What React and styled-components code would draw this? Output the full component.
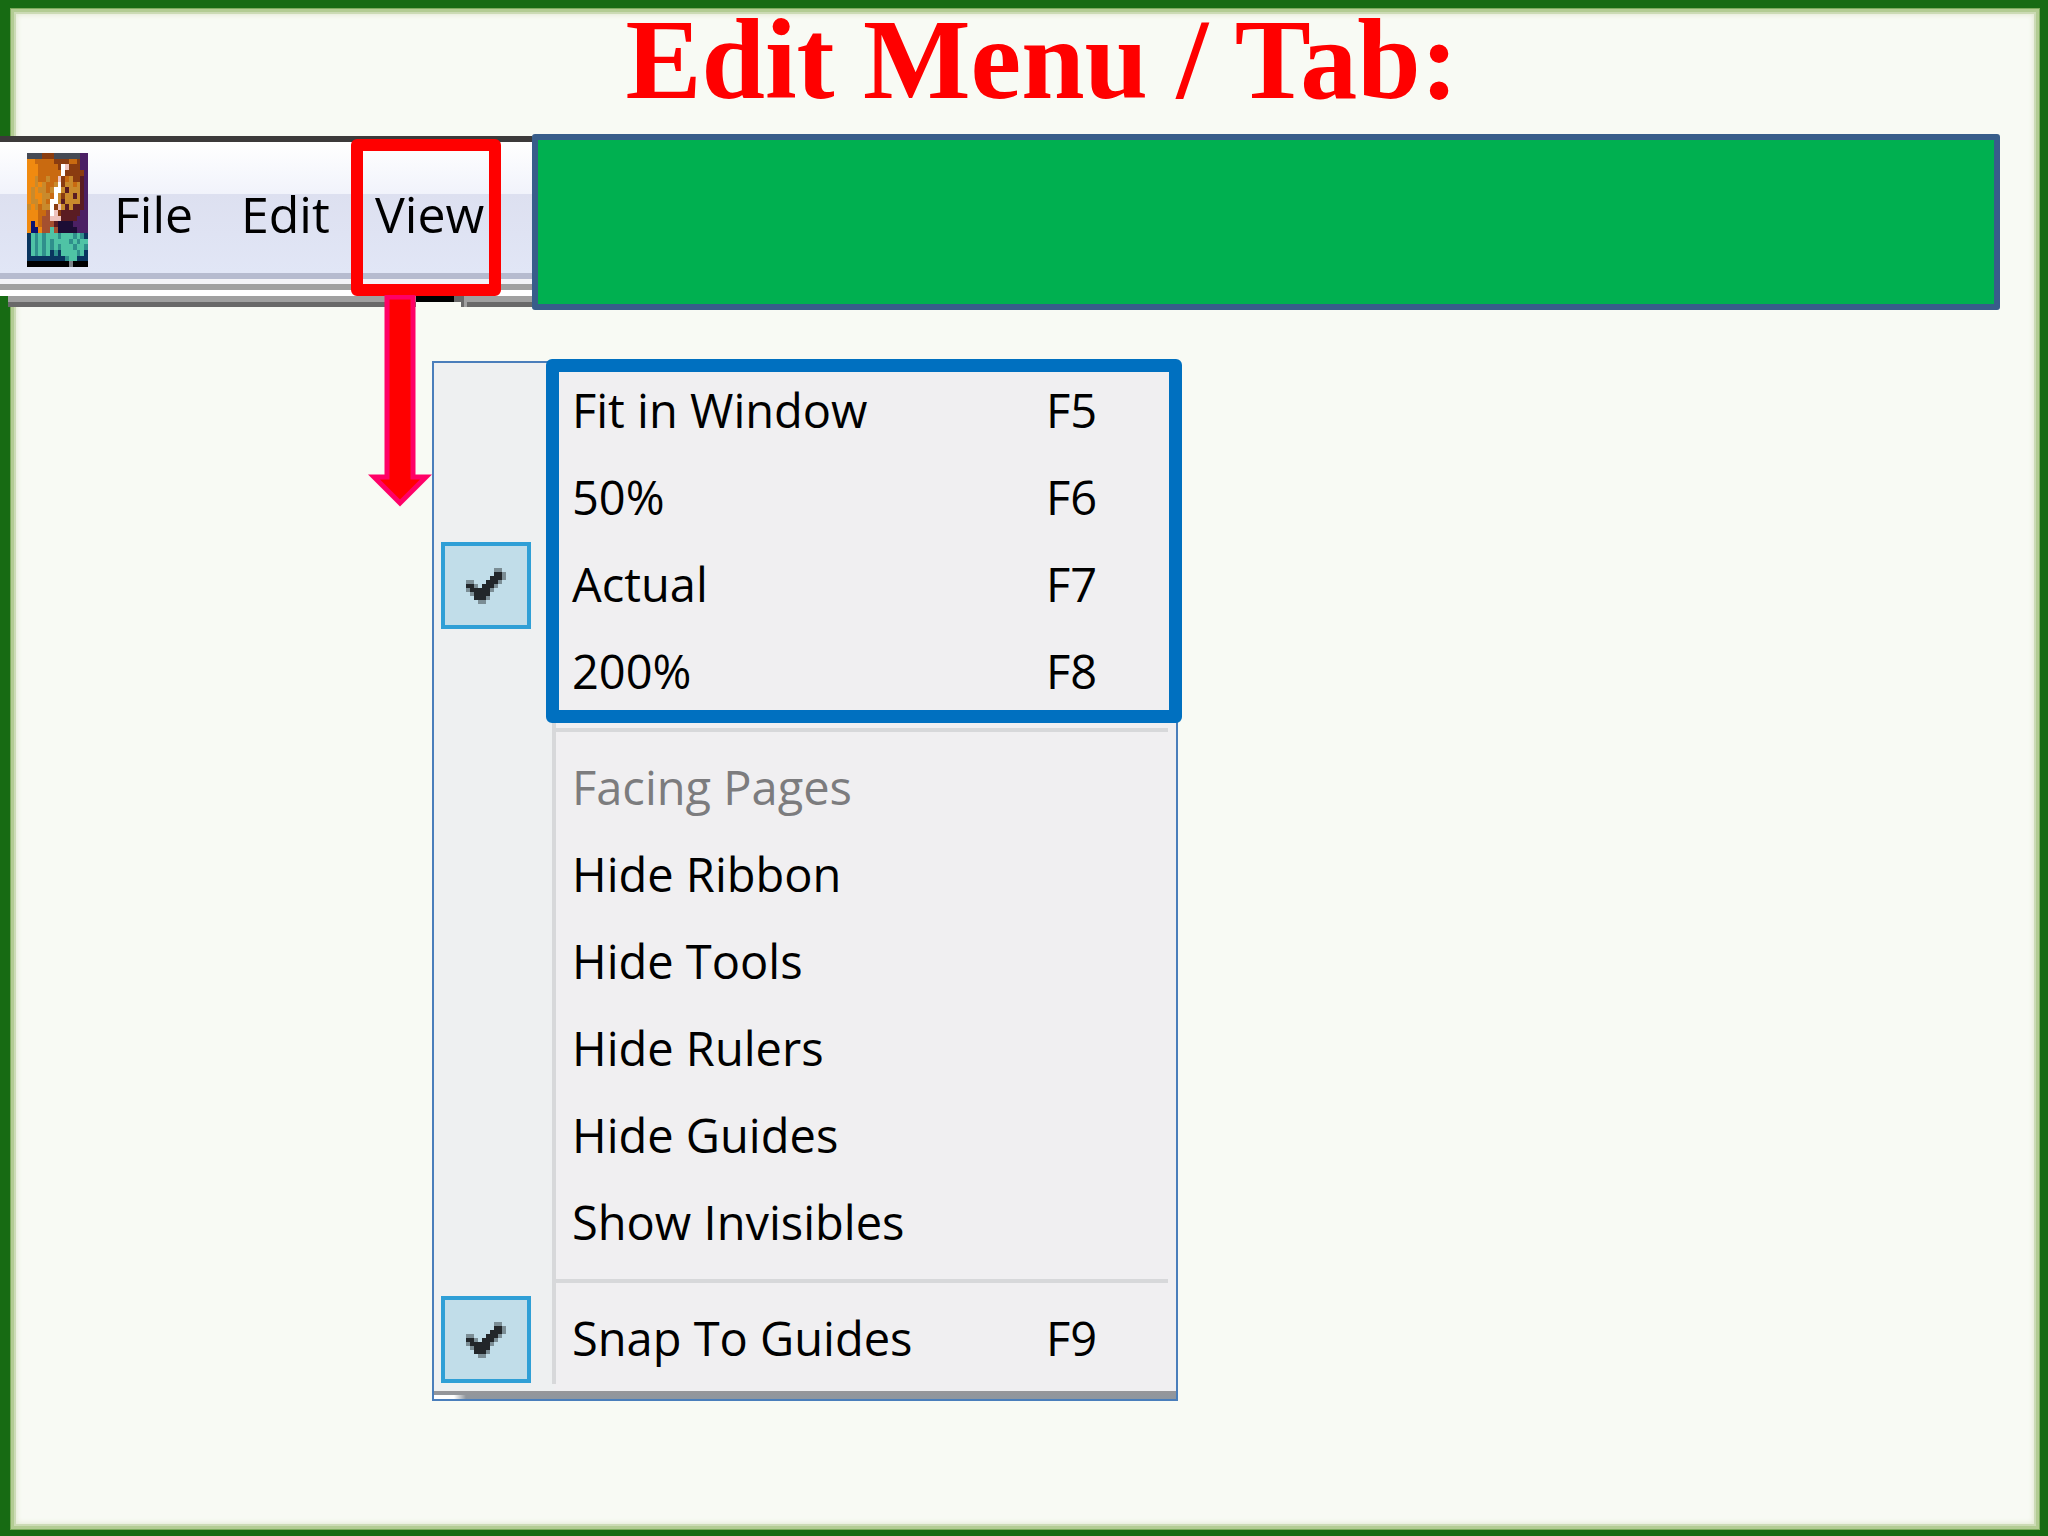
import React from "react";
import styled, { createGlobalStyle } from "styled-components";

const GlobalStyle = createGlobalStyle`
  *, *::before, *::after {
    box-sizing: border-box;
  }
  body {
    margin: 0;
    background: #f8faf4;
  }
  button {
    margin: 0;
    padding: 0;
    border: 0;
    background: none;
    color: inherit;
    font: inherit;
    text-align: left;
  }
`;

const Slide = styled.main`
  position: relative;
  min-height: 100vh;
  font-family: "Open Sans", "Noto Sans", sans-serif;
  color: #000;
`;

const Frame = styled.div`
  position: absolute;
  inset: 0;
  border: solid #176b13;
  border-width: 8px 8px 6px 10px;
  box-shadow: inset 0 0 0 1px #5f9a45;

  &::before {
    content: "";
    position: absolute;
    inset: 0;
    border: 1px solid #7dab5c;
    box-shadow: inset 0 0 0 3px #b3cc93, inset 0 0 0 5px #ccdbb5,
      inset 0 0 5px 6px #e3e9d2;
  }
`;

const Title = styled.h1`
  position: relative;
  display: flex;
  justify-content: center;
  margin: 0;
  padding-left: 36px;
  height: 134px;
  font: bold 114px/120px "Liberation Serif", serif;
  color: #ff0000;
`;

const TopRow = styled.div`
  position: relative;
  display: flex;
  align-items: flex-start;
  padding-right: 48px;
`;

const MenuBar = styled.nav`
  flex: none;
  width: 532px;
  margin-top: 2px;
  border-top: 6px solid #3c3a3a;
`;

const MenuBarItems = styled.div`
  display: flex;
  align-items: stretch;
  height: 131px;
  padding-left: 27px;
  background: linear-gradient(
    #ffffff 0,
    #f1f3fb 52px,
    #dde0f0 52px,
    #e1e6f6 131px
  );
`;

const AppIcon = styled.svg`
  width: 61px;
  height: 114px;
  margin: 11px 26px 0 0;
`;

const BarButton = styled.button`
  position: relative;
  width: ${(p) => p.$width}px;
  && {
    padding-top: 12px;
    font-size: 50px;
    line-height: 118px;
  }
`;

const ViewMark = styled.span`
  position: absolute;
  top: -3px;
  left: -24px;
  width: 150px;
  height: 157px;
  border: 12px solid #ff0000;
  border-radius: 6px;
`;

const Arrow = styled.svg`
  position: absolute;
  top: 153px;
  left: -7px;
  width: 64px;
  height: 212px;
  z-index: 1;
`;

const Rails = styled.div`
  height: 23px;
  background: linear-gradient(
    #b6bbcf 6px,
    #f3f3f7 6px,
    #f3f3f7 11px,
    #a0a0a0 11px,
    #a0a0a0 17px,
    #ffffff 17px
  );
`;

const RulerEdge = styled.div`
  display: flex;
  height: 11px;
  padding-left: 8px;
`;

const EdgeBar = styled.span`
  flex: ${(p) => (p.$width ? `0 0 ${p.$width}px` : "1")};
  background: linear-gradient(
    ${(p) => p.$top} 6px,
    ${(p) => p.$bottom} 6px
  );
`;

const GreenBox = styled.div`
  flex: 1;
  height: 176px;
  border: 6px solid #385d8a;
  border-radius: 3px;
  background: #00b050;
`;

const Menu = styled.div`
  position: relative;
  width: 746px;
  margin: 51px 0 0 432px;
  border: 2px solid #4a7ebb;
  background: linear-gradient(90deg, #eef0f1 120px, #f0eff1 120px);
`;

const MenuBody = styled.div`
  padding: 5px 8px 8px 7px;
`;

const Gutter = styled.span`
  position: absolute;
  top: 0;
  bottom: 15px;
  left: 118px;
  width: 4px;
  background: #d7d8da;
`;

const Row = styled.button`
  && {
    display: grid;
    grid-template-columns: 90px 1fr 122px;
    align-items: start;
    width: 100%;
    height: 87px;
    font-size: 47px;
    line-height: 84px;
    color: ${(p) => (p.disabled ? "#7c7c7e" : "#000")};
  }
`;

const Label = styled.span`
  padding-left: 41px;
  white-space: nowrap;
`;

const CheckBox = styled.span`
  display: flex;
  align-items: center;
  justify-content: center;
  height: 87px;
  border: ${(p) => (p.$on ? "4px solid #2f9fd6" : "0")};
  background: ${(p) => (p.$on ? "#c1dde9" : "none")};
`;

const Divider = styled.hr`
  height: 4px;
  margin: 12px 0 13px 114px;
  border: 0;
  background: #d7d8da;
`;

const MenuShadow = styled.div`
  height: 8px;
  background: linear-gradient(90deg, #fff 20px, transparent 32px) bottom / 100%
      4px no-repeat,
    linear-gradient(#969699, #8e969f);
`;

const ZoomGroup = styled.div`
  position: relative;

  &::after {
    content: "";
    position: absolute;
    top: -9px;
    right: -14px;
    bottom: -7px;
    left: 105px;
    border: 13px solid #0070c0;
    border-radius: 6px;
    pointer-events: none;
    z-index: 1;
  }
`;

const palette = {
  s: "#454a55",
  o: "#f08a10",
  d: "#c96a10",
  b: "#8a3c10",
  r: "#a5502f",
  g: "#c98a2c",
  w: "#ffffff",
  p: "#eec4bd",
  m: "#5a1c22",
  v: "#4b2064",
  k: "#1c0d35",
  n: "#0b1272",
  u: "#0a355f",
  t: "#4fc3a5",
  c: "#2f8f8c",
  x: "#000000",
  y: "#7c8288",
};

const iconRows = [
  "ssssbbbsssssssvv",
  "oodddddbbbbddbvv",
  "ooodddddbwpbbbvv",
  "oooddddddwbbbbbv",
  "oogddgddpbdgbbmv",
  "oogogddgwbggdgmv",
  "ogoggdgwwgmgggmv",
  "ogooggdwgbggmgmv",
  "oggogdwwgmggggmv",
  "gogdggwbpgmgmmmv",
  "oooddrwpbmmmmmvv",
  "ooodrrpppmmmmvvv",
  "onodrrrmkkkkvvvv",
  "onnorrtrkkkkkvvv",
  "utctctttctttctcu",
  "utctctcttttctctt",
  "utctctctctttcttc",
  "utctctucuttttctu",
  "uuuuuuuuuucttuuu",
  "xxxxxxxxxxxyxxxx",
];

const checkRows = [
  ".......gg.",
  ".......kkg",
  "......kkkg",
  "gg...kkkg.",
  "kkg.kkkg..",
  "gkkkkkg...",
  ".gkkkk....",
  "..kkkg....",
  "...gg.....",
];

const Pixels = ({ rows, colors }) =>
  rows.map((row, y) =>
    [...row].map((key, x) =>
      colors[key] ? (
        <rect key={`${x}-${y}`} x={x} y={y} width="1" height="1" fill={colors[key]} />
      ) : null
    )
  );

const Check = () => (
  <svg
    width="40"
    height="36"
    viewBox="0 0 10 9"
    shapeRendering="crispEdges"
    aria-hidden="true"
  >
    <Pixels rows={checkRows} colors={{ k: "#22262a", g: "#7b8d95" }} />
  </svg>
);

const zoomItems = [
  { label: "Fit in Window", hotkey: "F5" },
  { label: "50%", hotkey: "F6" },
  { label: "Actual", hotkey: "F7", checked: true },
  { label: "200%", hotkey: "F8" },
];

const viewItems = [
  { label: "Facing Pages", disabled: true },
  { label: "Hide Ribbon" },
  { label: "Hide Tools" },
  { label: "Hide Rulers" },
  { label: "Hide Guides" },
  { label: "Show Invisibles" },
];

const MenuRow = ({ label, hotkey, checked, disabled }) => (
  <Row
    type="button"
    role="menuitemcheckbox"
    aria-checked={!!checked}
    disabled={disabled}
  >
    <CheckBox $on={checked}>{checked && <Check />}</CheckBox>
    <Label>{label}</Label>
    <span>{hotkey}</span>
  </Row>
);

const App = () => (
  <Slide>
    <GlobalStyle />
    <Frame />
    <Title>Edit Menu / Tab:</Title>

    <TopRow>
      <MenuBar>
        <MenuBarItems>
          <AppIcon
            viewBox="0 0 16 20"
            preserveAspectRatio="none"
            shapeRendering="crispEdges"
            aria-hidden="true"
          >
            <Pixels rows={iconRows} colors={palette} />
          </AppIcon>
          <BarButton type="button" $width={127}>
            File
          </BarButton>
          <BarButton type="button" $width={134}>
            Edit
          </BarButton>
          <BarButton type="button" $width={120}>
            View
            <ViewMark />
            <Arrow viewBox="0 0 64 212" aria-hidden="true">
              <path
                d="M19 2H45V182H58L32 208L6 182H19Z"
                fill="#ff0000"
                stroke="#ff0066"
                strokeWidth="5"
              />
            </Arrow>
          </BarButton>
        </MenuBarItems>
        <Rails />
        <RulerEdge>
          <EdgeBar $width={408} $top="#a0a0a0" $bottom="#696969" />
          <EdgeBar $width={38} $top="#000000" $bottom="#f8faf4" />
          <EdgeBar $width={7} $top="#696969" $bottom="#f8faf4" />
          <EdgeBar $width={3} $top="#696969" $bottom="#696969" />
          <EdgeBar $width={3} $top="#a0a0a0" $bottom="#a0a0a0" />
          <EdgeBar $top="#a0a0a0" $bottom="#696969" />
        </RulerEdge>
      </MenuBar>
      <GreenBox />
    </TopRow>

    <Menu role="menu">
      <Gutter />
      <MenuBody>
        <ZoomGroup>
          {zoomItems.map((item) => (
            <MenuRow key={item.label} {...item} />
          ))}
        </ZoomGroup>
        <Divider />
        {viewItems.map((item) => (
          <MenuRow key={item.label} {...item} />
        ))}
        <Divider />
        <MenuRow label="Snap To Guides" hotkey="F9" checked />
      </MenuBody>
      <MenuShadow />
    </Menu>
  </Slide>
);

export default App;
